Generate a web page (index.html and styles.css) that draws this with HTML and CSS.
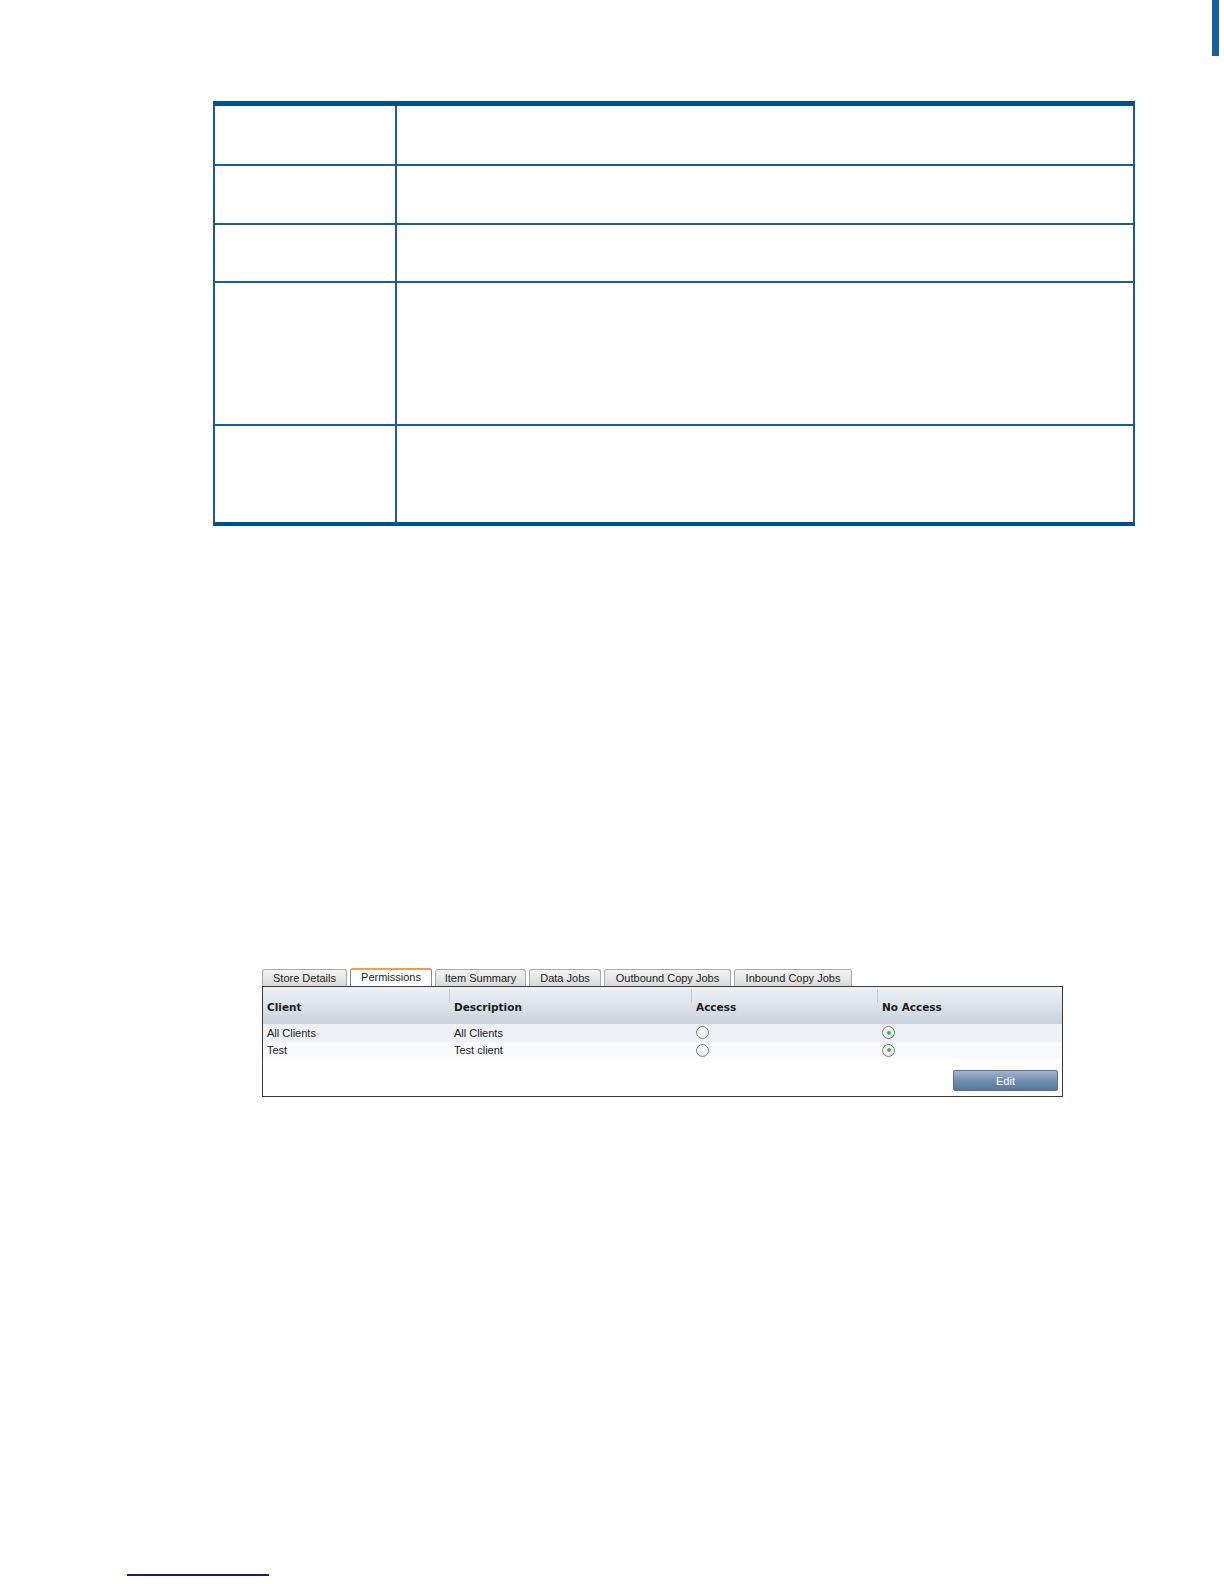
FILE: index.html
```html
<!DOCTYPE html>
<html>
<head>
<meta charset="utf-8">
<link rel="stylesheet" href="styles.css">
</head>
<body>
<div class="page">
  <div class="edge-tab"></div>

  <div class="spec-table">
    <div class="spec-row r1"><div class="spec-key"></div><div class="spec-val"></div></div>
    <div class="spec-row r2"><div class="spec-key"></div><div class="spec-val"></div></div>
    <div class="spec-row r3"><div class="spec-key"></div><div class="spec-val"></div></div>
    <div class="spec-row r4"><div class="spec-key"></div><div class="spec-val"></div></div>
    <div class="spec-row r5"><div class="spec-key"></div><div class="spec-val"></div></div>
  </div>

  <div class="shot">
    <div class="tabs">
      <div class="tab w1">Store Details</div>
      <div class="tab active w2">Permissions</div>
      <div class="tab w3">Item Summary</div>
      <div class="tab w4">Data Jobs</div>
      <div class="tab w5">Outbound Copy Jobs</div>
      <div class="tab w6">Inbound Copy Jobs</div>
    </div>
    <div class="panel">
      <div class="grid head">
        <div class="hcell c1">Client</div>
        <div class="hcell c2">Description</div>
        <div class="hcell c3">Access</div>
        <div class="hcell c4">No Access</div>
      </div>
      <div class="grid row odd">
        <div class="cell">All Clients</div>
        <div class="cell">All Clients</div>
        <div class="cell"><span class="radio"></span></div>
        <div class="cell"><span class="radio on"></span></div>
      </div>
      <div class="grid row even">
        <div class="cell">Test</div>
        <div class="cell">Test client</div>
        <div class="cell"><span class="radio"></span></div>
        <div class="cell"><span class="radio on"></span></div>
      </div>
      <div class="actions">
        <button class="btn">Edit</button>
      </div>
    </div>
  </div>

  <div class="footer">
    <div class="footer-line"></div>
  </div>
</div>
</body>
</html>
```

FILE: styles.css
```css
* { box-sizing: border-box; }
html, body { margin: 0; padding: 0; background: #fff; }
body { font-family: "Liberation Sans", Arial, sans-serif; }

.page {
  position: relative;
  width: 1224px;
  height: 1584px;
  padding-top: 101px;
}

.edge-tab {
  position: absolute;
  top: 0;
  left: 1212px;
  width: 7px;
  height: 56px;
  background: #1a5fa6;
}

/* spec table */
.spec-table {
  margin-left: 213px;
  width: 922px;
  border-top: 5px solid #00508f;
  border-bottom: 4px solid #00508f;
  border-left: 2px solid #1a5c9c;
  border-right: 2px solid #1a5c9c;
}
.spec-row {
  display: flex;
  border-top: 2px solid #1a5c9c;
}
.spec-row.r1 { border-top: none; height: 58px; }
.spec-row.r2 { height: 59px; }
.spec-row.r3 { height: 58px; }
.spec-row.r4 { height: 143px; }
.spec-row.r5 { height: 98px; }
.spec-key {
  width: 182px;
  border-right: 2px solid #1a5c9c;
}
.spec-val { flex: 1; }

/* screenshot of tabs UI */
.shot {
  margin-top: 443px;
  margin-left: 262px;
  width: 801px;
  font-family: "Liberation Sans", Tahoma, sans-serif;
  font-size: 11px;
  color: #1a1a1a;
}
.tabs {
  display: flex;
  gap: 3px;
  height: 17px;
  align-items: flex-end;
}
.tab {
  height: 17px;
  border: 1px solid #a9a9a9;
  border-bottom: none;
  border-radius: 3px 3px 0 0;
  background: linear-gradient(#f4f4f4, #dadada);
  text-align: center;
  line-height: 16px;
  font-size: 11px;
  color: #222;
}
.tab.active {
  background: #fff;
  border: 1px solid #8a8a8a;
  border-top: 2px solid #e7a24a;
  border-bottom: none;
  line-height: 15px;
  height: 18px;
}
.w1 { width: 85px; }
.w2 { width: 82px; }
.w3 { width: 91px; }
.w4 { width: 72px; }
.w5 { width: 127px; }
.w6 { width: 118px; }

.panel {
  border: 1px solid #3a3a3a;
  height: 111px;
  background: #fff;
}
.grid {
  display: grid;
  grid-template-columns: 186px 242px 186px 1fr;
}
.head {
  height: 37px;
  background: linear-gradient(#eef1f5 0%, #dde4eb 45%, #c9d3de 100%);
}
.hcell {
  position: relative;
  font-family: "DejaVu Sans", Verdana, sans-serif;
  font-weight: bold;
  font-size: 10.5px;
  color: #1c1c1c;
  padding: 14px 0 0 4px;
}
.hcell.c2, .hcell.c3, .hcell.c4 { padding-left: 5px; }
.hcell.c2::before, .hcell.c3::before, .hcell.c4::before {
  content: "";
  position: absolute;
  left: 0;
  top: 2px;
  height: 14px;
  width: 1px;
  background: #c4ccd6;
}
.row { height: 18px; align-items: center; }
.row.odd { background: #edf0f4; }
.row.even { background: #f8f9fb; height: 17px; }
.cell { padding-left: 4px; font-size: 11px; line-height: 17px; color: #222; }
.cell:nth-child(n+2) { padding-left: 5px; }
.radio {
  display: inline-block;
  vertical-align: middle;
  width: 13px;
  height: 13px;
  border-radius: 50%;
  border: 1px solid #7b8590;
  background: radial-gradient(circle at 40% 35%, #ffffff 0%, #f2f2f2 55%, #d5d8dc 100%);
  position: relative;
  margin-left: 0;
  margin-top: -2px;
}
.radio.on::after {
  content: "";
  position: absolute;
  left: 3.5px;
  top: 3.5px;
  width: 4px;
  height: 4px;
  border-radius: 50%;
  background: #35b83a;
}
.actions {
  display: flex;
  justify-content: flex-end;
  padding: 11px 4px 0 0;
}
.btn {
  width: 105px;
  height: 21px;
  border: 1px solid #556f8e;
  border-radius: 2px;
  background: linear-gradient(#a3b6cc 0%, #7692b2 45%, #58769b 100%);
  color: #fff;
  font-family: "Liberation Sans", Tahoma, sans-serif;
  font-size: 11px;
  padding: 0;
}

.footer {
  position: absolute;
  left: 127px;
  top: 1574px;
}
.footer-line {
  width: 142px;
  height: 2px;
  background: #1c1a7f;
}
```
